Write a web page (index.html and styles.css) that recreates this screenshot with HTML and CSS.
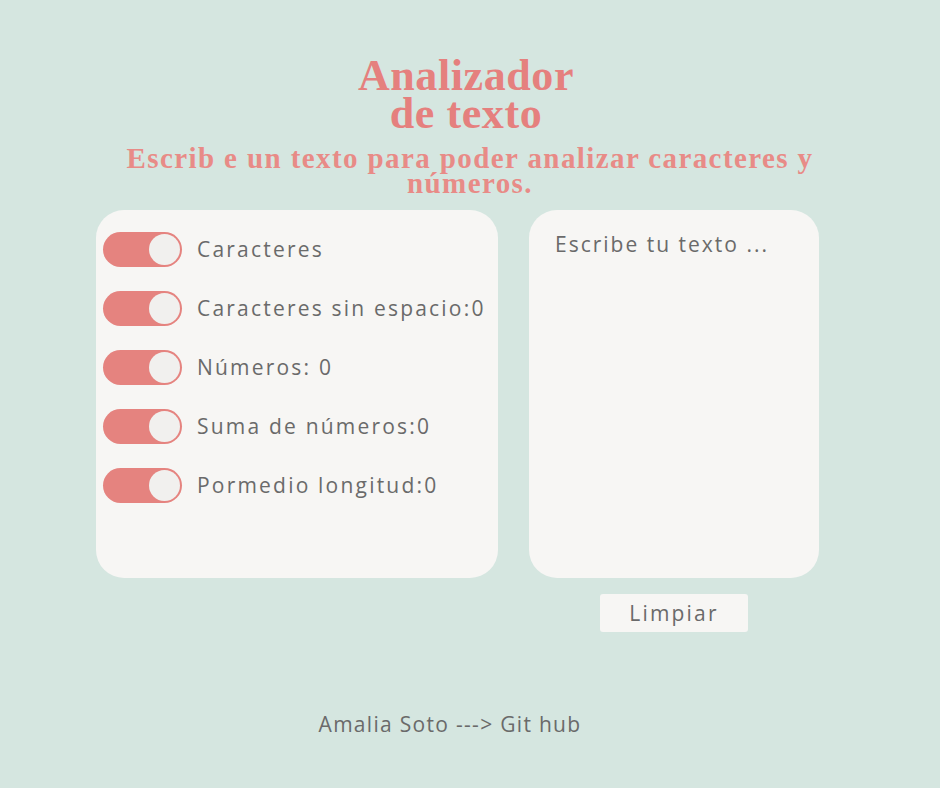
FILE: index.html
```html
<!DOCTYPE html>
<html lang="es">
<head>
<meta charset="utf-8">
<title>Analizador de texto</title>
<link rel="stylesheet" href="styles.css">
</head>
<body>
<main class="page">
  <header class="header">
    <h1 class="title">Analizador<br>de texto</h1>
    <p class="subtitle">Escrib e un texto para poder analizar caracteres y números.</p>
  </header>
  <section class="content">
    <div class="panel stats">
      <div class="row"><span class="toggle"><span class="knob"></span></span><span class="label">Caracteres</span></div>
      <div class="row"><span class="toggle"><span class="knob"></span></span><span class="label">Caracteres sin espacio:0</span></div>
      <div class="row"><span class="toggle"><span class="knob"></span></span><span class="label">Números: 0</span></div>
      <div class="row"><span class="toggle"><span class="knob"></span></span><span class="label">Suma de números:0</span></div>
      <div class="row"><span class="toggle"><span class="knob"></span></span><span class="label">Pormedio longitud:0</span></div>
    </div>
    <div class="right">
      <textarea class="panel input" placeholder="Escribe tu texto ..."></textarea>
      <button class="clear">Limpiar</button>
    </div>
  </section>
  <footer class="footer">Amalia Soto ---&gt; Git hub</footer>
</main>
</body>
</html>
```
FILE: styles.css
```css
* { box-sizing: border-box; }
html, body { margin: 0; padding: 0; }
body {
  background: #d5e6e0;
  width: 940px;
  height: 788px;
  overflow: hidden;
  font-family: "Open Sans", "Lato", sans-serif;
}
.page { display: flex; flex-direction: column; }
.header { text-align: center; padding-top: 57px; }
.title {
  margin: 0 0 0 -8px;
  font-family: "Liberation Serif", serif;
  font-weight: bold;
  font-size: 44px;
  line-height: 38px;
  letter-spacing: 0.6px;
  color: #e5807e;
}
.subtitle {
  margin: 13px auto 0;
  width: 720px;
  padding-left: 0;
  font-family: "Liberation Serif", serif;
  font-weight: bold;
  font-size: 29px;
  line-height: 25px;
  letter-spacing: 1.4px;
  color: #e88b87;
}
.content {
  display: flex;
  gap: 31px;
  padding-left: 96px;
  margin-top: 14px;
}
.panel { background: #f7f6f4; border-radius: 28px; }
.stats {
  width: 402px;
  height: 368px;
  padding: 22px 0 0 7px;
  display: flex;
  flex-direction: column;
  gap: 24px;
}
.row { display: flex; align-items: center; gap: 15px; height: 35px; }
.toggle {
  width: 79px;
  height: 35px;
  border-radius: 18px;
  background: #e5837f;
  position: relative;
  flex: none;
}
.knob {
  position: absolute;
  right: 2px;
  top: 2px;
  width: 31px;
  height: 31px;
  border-radius: 50%;
  background: #f1f0ee;
}
.label {
  font-size: 21px;
  color: #6a6a6a;
  letter-spacing: 2.2px;
  margin-top: -2px;
}
.right { display: flex; flex-direction: column; align-items: center; }
.input {
  width: 290px;
  height: 368px;
  border: none;
  outline: none;
  resize: none;
  padding: 20px 26px;
  font-family: "Open Sans", "Lato", sans-serif;
  font-size: 21px;
  letter-spacing: 2px;
  color: #6a6a6a;
}
.input::placeholder { color: #6a6a6a; opacity: 1; }
.clear {
  margin-top: 16px;
  width: 148px;
  height: 38px;
  border: none;
  border-radius: 3px;
  background: #f7f6f4;
  font-family: "Open Sans", "Lato", sans-serif;
  font-size: 21px;
  letter-spacing: 2.2px;
  color: #6a6a6a;
}
.footer {
  margin-top: 78px;
  padding-right: 40px;
  text-align: center;
  font-size: 21px;
  color: #6a6a6a;
  letter-spacing: 1.3px;
}
```
